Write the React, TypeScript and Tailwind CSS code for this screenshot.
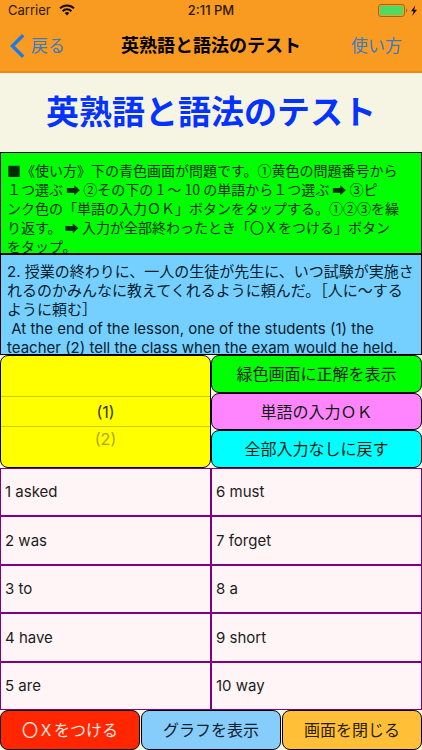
import React from "react";

const words: string[] = [
  "1 asked", "6 must",
  "2 was", "7 forget",
  "3 to", "8 a",
  "4 have", "9 short",
  "5 are", "10 way",
];

function StatusBar() {
  return (
    <div className="grid h-5 grid-cols-3 items-center px-2 text-[13px] leading-5 text-[#2b1a05]">
      <div className="flex items-center gap-2">
        <span>Carrier</span>
        <svg width="16" height="12" viewBox="0 0 16 12" fill="none" stroke="#150c00" strokeWidth="2" aria-hidden="true">
          <path d="M1 4.4a10 10 0 0 1 14 0" />
          <path d="M3.6 7.2a6.2 6.2 0 0 1 8.8 0" />
          <path d="M8 11.6 5.6 9.1a3.5 3.5 0 0 1 4.8 0Z" fill="#150c00" stroke="none" />
        </svg>
      </div>
      <span className="text-center font-medium">2:11 PM</span>
      <svg className="-mr-1 justify-self-end" width="40" height="13" viewBox="0 0 40 13" aria-hidden="true">
        <rect x="0.5" y="0.5" width="26" height="12" rx="2.5" fill="none" stroke="#9a6a1c" />
        <rect x="2" y="2" width="23" height="9" rx="1" fill="#4cd964" />
        <path d="M28 4.5a2.2 2.2 0 0 1 0 4Z" fill="#9a6a1c" />
        <path d="M37.2 1.5 33 7.2h2.6L34.2 12l4.8-6.2h-2.8Z" fill="#150c00" />
      </svg>
    </div>
  );
}

function NavBar() {
  return (
    <nav className="flex h-[53px] items-center justify-between border-b-2 border-[#ee8a18] pr-5 pl-[10px] text-[#3a7bc0]">
      <button className="flex w-[72px] items-center gap-[6px] text-[17px] leading-6">
        <svg width="15" height="24" viewBox="0 0 15 24" fill="none" stroke="#1c7be6" strokeWidth="3.4" aria-hidden="true">
          <path d="M13.2 1.2 2.4 12l10.8 10.8" />
        </svg>
        <span className="whitespace-nowrap">戻る</span>
      </button>
      <span className="text-[18px] leading-6 font-bold whitespace-nowrap text-black">英熟語と語法のテスト</span>
      <button className="w-[62px] text-right text-[17px] leading-6 whitespace-nowrap">使い方</button>
    </nav>
  );
}

function Instructions() {
  return (
    <p className="h-[102px] overflow-hidden border border-black bg-[#00ff00] px-[6px] pt-2 font-['Noto_Sans_CJK_JP',sans-serif] text-sm leading-[19px] whitespace-nowrap text-[#042c04]">
      ■《使い方》下の青色画面が問題です。①黄色の問題番号から<br />
      １つ選ぶ <b>➡</b> ②その下の 1 〜 10 の単語から１つ選ぶ <b>➡</b> ③ピ<br />
      ンク色の「単語の入力ＯＫ」ボタンをタップする。①②③を繰<br />
      り返す。 <b>➡</b> 入力が全部終わったとき「〇Ｘをつける」ボタン<br />
      をタップ。
    </p>
  );
}

function Question() {
  return (
    <p className="h-[101px] overflow-hidden border border-black bg-[#76d0ff] px-[6px] pt-[7px] text-[15px] leading-[19px] whitespace-pre text-[#06202c]">
      2. 授業の終わりに、一人の生徒が先生に、いつ試験が実施さ<br />
      れるのかみんなに教えてくれるように頼んだ。［人に〜する<br />
      ように頼む］<br />
      {" At the end of the lesson, one of the students (1) the"}<br />
      teacher (2) tell the class when the exam would he held.
    </p>
  );
}

function NumberPicker() {
  return (
    <div role="listbox" aria-label="問題番号" className="flex flex-col rounded-lg border border-black bg-[#ffff00] pt-10">
      <button role="option" aria-selected="true" className="h-[31px] border-y border-[#cccc00] text-base text-[#33330a]">(1)</button>
      <button role="option" aria-selected="false" className="h-6 text-base text-[#a9a900]">(2)</button>
    </div>
  );
}

const action = "rounded-lg border border-black text-base";

export default function App() {
  return (
    <main className="flex min-h-screen flex-col bg-[#f6f5e3] font-['Inter','Noto_Sans_CJK_JP',sans-serif]">
      <header className="bg-[#f99b20]">
        <StatusBar />
        <NavBar />
      </header>
      <h1 className="py-4 text-center text-[33px] leading-[47px] font-bold whitespace-nowrap text-[#0433ff]">英熟語と語法のテスト</h1>
      <Instructions />
      <Question />
      <section className="grid grid-cols-2">
        <NumberPicker />
        <div className="flex flex-col text-[#101c10]">
          <button className={`h-[38px] bg-[#00ff00] ${action}`}>緑色画面に正解を表示</button>
          <button className={`h-[37px] bg-[#ff85ff] ${action}`}>単語の入力ＯＫ</button>
          <button className={`h-[38px] bg-[#00ffff] ${action}`}>全部入力なしに戻す</button>
        </div>
      </section>
      <section className="grid flex-1 grid-cols-2 border-y border-[#800080] bg-[#fff5f6]">
        {words.map((word) => (
          <button key={word} className="border border-t-0 border-b-2 border-[#800080] px-1 pt-px text-left text-[15px] text-[#1c1c1c] nth-last-[-n+2]:border-b-0">
            {word}
          </button>
        ))}
      </section>
      <footer className="grid grid-cols-3 gap-px">
        <button className={`h-10 bg-[#ff2600] text-[#ffe9e0] ${action}`}>〇Ｘをつける</button>
        <button className={`h-10 bg-[#86cdfb] text-[#10202c] ${action}`}>グラフを表示</button>
        <button className={`h-10 bg-[#ffc038] text-[#2c1e04] ${action}`}>画面を閉じる</button>
      </footer>
    </main>
  );
}
